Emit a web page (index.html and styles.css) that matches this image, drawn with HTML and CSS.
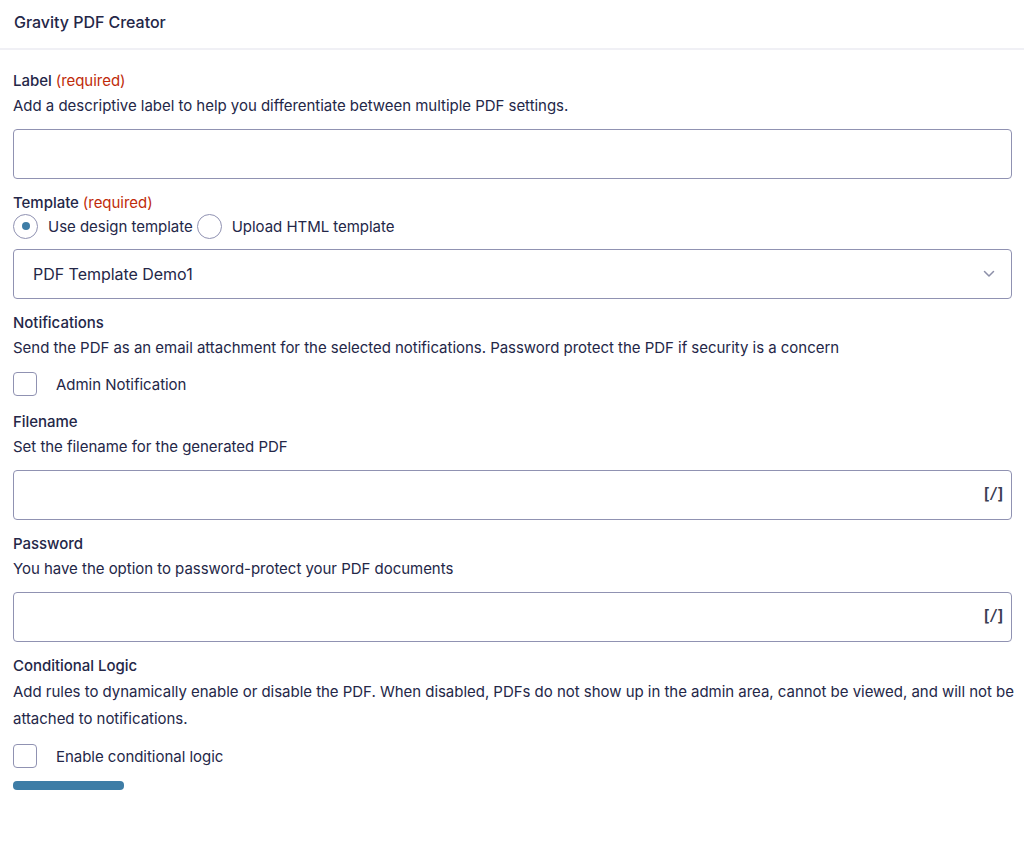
FILE: index.html
```html
<!DOCTYPE html>
<html lang="en">
<head>
    <meta charset="UTF-8">
    <meta name="viewport" content="width=device-width, initial-scale=1.0">
    <title>Gravity PDF Creator</title>
    <link rel="stylesheet" href="styles.css">
</head>
<body>
    <header class="panel-header">
        <div class="panel-title">Gravity PDF Creator</div>
    </header>

    <form class="pdf-form">
        <div class="field">
            <label class="field-label" for="label">Label <span class="required">(required)</span></label>
            <div class="field-desc">Add a descriptive label to help you differentiate between multiple PDF settings.</div>
            <input type="text" id="label" class="text-input">
        </div>

        <div class="field">
            <div class="field-label">Template <span class="required">(required)</span></div>
            <div class="radio-row">
                <label class="radio-option">
                    <span class="radio checked"></span>
                    <span>Use design template</span>
                </label>
                <label class="radio-option">
                    <span class="radio"></span>
                    <span>Upload HTML template</span>
                </label>
            </div>
            <div class="select-box">
                <span>PDF Template Demo1</span>
                <svg class="chevron" width="12" height="8" viewBox="0 0 12 8">
                    <path d="M1.5 1.5 L6 6 L10.5 1.5" fill="none" stroke="#8c8fa8" stroke-width="1.5" stroke-linecap="round" stroke-linejoin="round"/>
                </svg>
            </div>
        </div>

        <div class="field">
            <div class="field-label">Notifications</div>
            <div class="field-desc">Send the PDF as an email attachment for the selected notifications. Password protect the PDF if security is a concern</div>
            <label class="check-row">
                <span class="checkbox"></span>
                <span>Admin Notification</span>
            </label>
        </div>

        <div class="field">
            <label class="field-label" for="filename">Filename</label>
            <div class="field-desc">Set the filename for the generated PDF</div>
            <div class="merge-input">
                <input type="text" id="filename" class="text-input">
                <span class="merge-tag">[/]</span>
            </div>
        </div>

        <div class="field">
            <label class="field-label" for="password">Password</label>
            <div class="field-desc">You have the option to password-protect your PDF documents</div>
            <div class="merge-input">
                <input type="text" id="password" class="text-input">
                <span class="merge-tag">[/]</span>
            </div>
        </div>

        <div class="field">
            <div class="field-label">Conditional Logic</div>
            <div class="field-desc long">Add rules to dynamically enable or disable the PDF. When disabled, PDFs do not show up in the admin area, cannot be viewed, and will not be attached to notifications.</div>
            <label class="check-row">
                <span class="checkbox"></span>
                <span>Enable conditional logic</span>
            </label>
        </div>

        <button type="button" class="save-button" aria-label="Save PDF"></button>
    </form>
</body>
</html>
```

FILE: styles.css
```css
body {
    font-family: Inter, "Liberation Sans", sans-serif;
    margin: 0;
    padding: 0;
    background-color: #fff;
    color: #242748;
    font-size: 15px;
    letter-spacing: -0.03px;
    height: 842px;
    overflow: hidden;
}

.panel-header {
    height: 48px;
    padding: 0 14px;
    display: flex;
    align-items: center;
    border-bottom: 2px solid #f0f0f5;
    margin-bottom: 18px;
}

.panel-title {
    font-size: 16px;
    font-weight: 500;
    margin-top: -4px;
}

.pdf-form {
    padding: 0 12px 0 13px;
    height: 722px;
    overflow: hidden;
    display: flex;
    flex-direction: column;
    gap: 11px;
}

.field {
    display: flex;
    flex-direction: column;
}

.field-label {
    font-weight: 500;
    line-height: 25px;
}

.required {
    color: #c02b0a;
    font-weight: 400;
}

.field-desc {
    line-height: 25px;
    margin-bottom: 11px;
}

.field-desc.long {
    line-height: 27px;
    margin-right: -12px;
}

.text-input {
    height: 50px;
    width: 100%;
    box-sizing: border-box;
    border: 1px solid #9092b2;
    border-radius: 4px;
    font-family: inherit;
    font-size: 16px;
    padding: 0 20px;
    color: #242748;
    background: #fff;
}

.radio-row {
    display: flex;
    align-items: center;
    height: 24px;
    margin-top: -1px;
    margin-bottom: 11px;
}

.radio-option {
    display: flex;
    align-items: center;
    gap: 10px;
    margin-right: 4px;
}

.radio {
    width: 23px;
    height: 23px;
    border: 1px solid #9092b2;
    border-radius: 50%;
    display: flex;
    align-items: center;
    justify-content: center;
}

.radio.checked::after {
    content: "";
    width: 8px;
    height: 8px;
    border-radius: 50%;
    background-color: #3e7da6;
}

.select-box {
    height: 50px;
    box-sizing: border-box;
    border: 1px solid #9092b2;
    border-radius: 4px;
    padding: 0 16px 0 19px;
    display: flex;
    align-items: center;
    justify-content: space-between;
    font-size: 16px;
}

.check-row {
    display: flex;
    align-items: center;
    gap: 19px;
    margin-top: 1px;
    margin-bottom: 2px;
}

.checkbox {
    width: 22px;
    height: 22px;
    border: 1px solid #9092b2;
    border-radius: 4px;
}

.merge-input {
    position: relative;
}

.merge-tag {
    position: absolute;
    right: 9px;
    top: 15px;
    font-family: "DejaVu Sans Mono", monospace;
    font-weight: bold;
    font-size: 15px;
    color: #3a3c52;
    letter-spacing: -2px;
}

.save-button {
    align-self: flex-start;
    width: 111px;
    height: 40px;
    border: none;
    border-radius: 4px;
    background-color: #3e7da6;
}
```
